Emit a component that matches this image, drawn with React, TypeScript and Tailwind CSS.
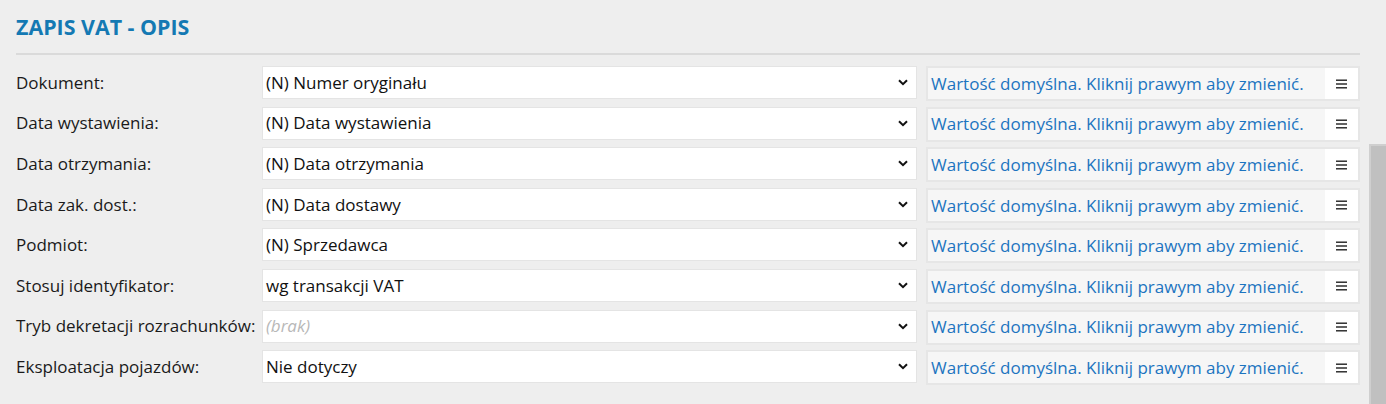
const rows: { label: string; value: string; empty?: boolean }[] = [
  { label: "Dokument:", value: "(N) Numer oryginału" },
  { label: "Data wystawienia:", value: "(N) Data wystawienia" },
  { label: "Data otrzymania:", value: "(N) Data otrzymania" },
  { label: "Data zak. dost.:", value: "(N) Data dostawy" },
  { label: "Podmiot:", value: "(N) Sprzedawca" },
  { label: "Stosuj identyfikator:", value: "wg transakcji VAT" },
  { label: "Tryb dekretacji rozrachunków:", value: "(brak)", empty: true },
  { label: "Eksploatacja pojazdów:", value: "Nie dotyczy" },
];

function Chevron() {
  return (
    <svg width="10" height="7" viewBox="0 0 10 7" className="shrink-0">
      <path d="M1 1.2 L5 5.2 L9 1.2" fill="none" stroke="#111" strokeWidth="2" />
    </svg>
  );
}

function Burger() {
  return (
    <svg width="11" height="10" viewBox="0 0 11 10">
      <rect x="0" y="0.5" width="11" height="1.4" fill="#222" />
      <rect x="0" y="4.3" width="11" height="1.4" fill="#222" />
      <rect x="0" y="8.1" width="11" height="1.4" fill="#222" />
    </svg>
  );
}

export default function App() {
  return (
    <div
      className="flex h-[404px] w-[1386px] overflow-hidden bg-[#eeeeee] text-[#1a1a1a]"
      style={{ fontFamily: '"Open Sans", "Noto Sans", sans-serif' }}
    >
      <main className="flex-1 pl-4 pr-[9px]">
        <h1 className="pt-[13px] text-[21.4px] font-bold leading-[28px] text-[#1479b3]">
          ZAPIS VAT - OPIS
        </h1>
        <div className="mt-[12px] h-[2px] bg-[#dadada]" />
        <div className="mt-[11px] flex flex-col gap-[7.6px]">
          {rows.map((r) => (
            <div key={r.label} className="flex h-[33px] items-center">
              <span className="w-[246px] shrink-0 text-[17px]">{r.label}</span>
              <div className="flex h-[33px] w-[655px] shrink-0 items-center justify-between border border-[#e4e4e4] bg-white pl-[3px] pr-[8px]">
                <span
                  className={
                    r.empty
                      ? "text-[17px] italic text-[#b8b8b8]"
                      : "text-[17px] text-[#111]"
                  }
                >
                  {r.value}
                </span>
                <Chevron />
              </div>
              <div className="ml-[9px] flex h-[35px] flex-1 self-start border-2 border-[#e6e6e6] bg-white">
                <div className="flex flex-1 items-center bg-[#f6f6f6] pl-[3px] text-[17px] text-[#1c74c0]">
                  Wartość domyślna. Kliknij prawym aby zmienić.
                </div>
                <div className="flex w-[33px] items-center justify-center">
                  <Burger />
                </div>
              </div>
            </div>
          ))}
        </div>
      </main>
      <div className="w-[17px] shrink-0 pt-[144px]">
        <div className="h-full border-l-2 border-t-2 border-[#cfcfcf] bg-[#c0c0c0]" />
      </div>
    </div>
  );
}
